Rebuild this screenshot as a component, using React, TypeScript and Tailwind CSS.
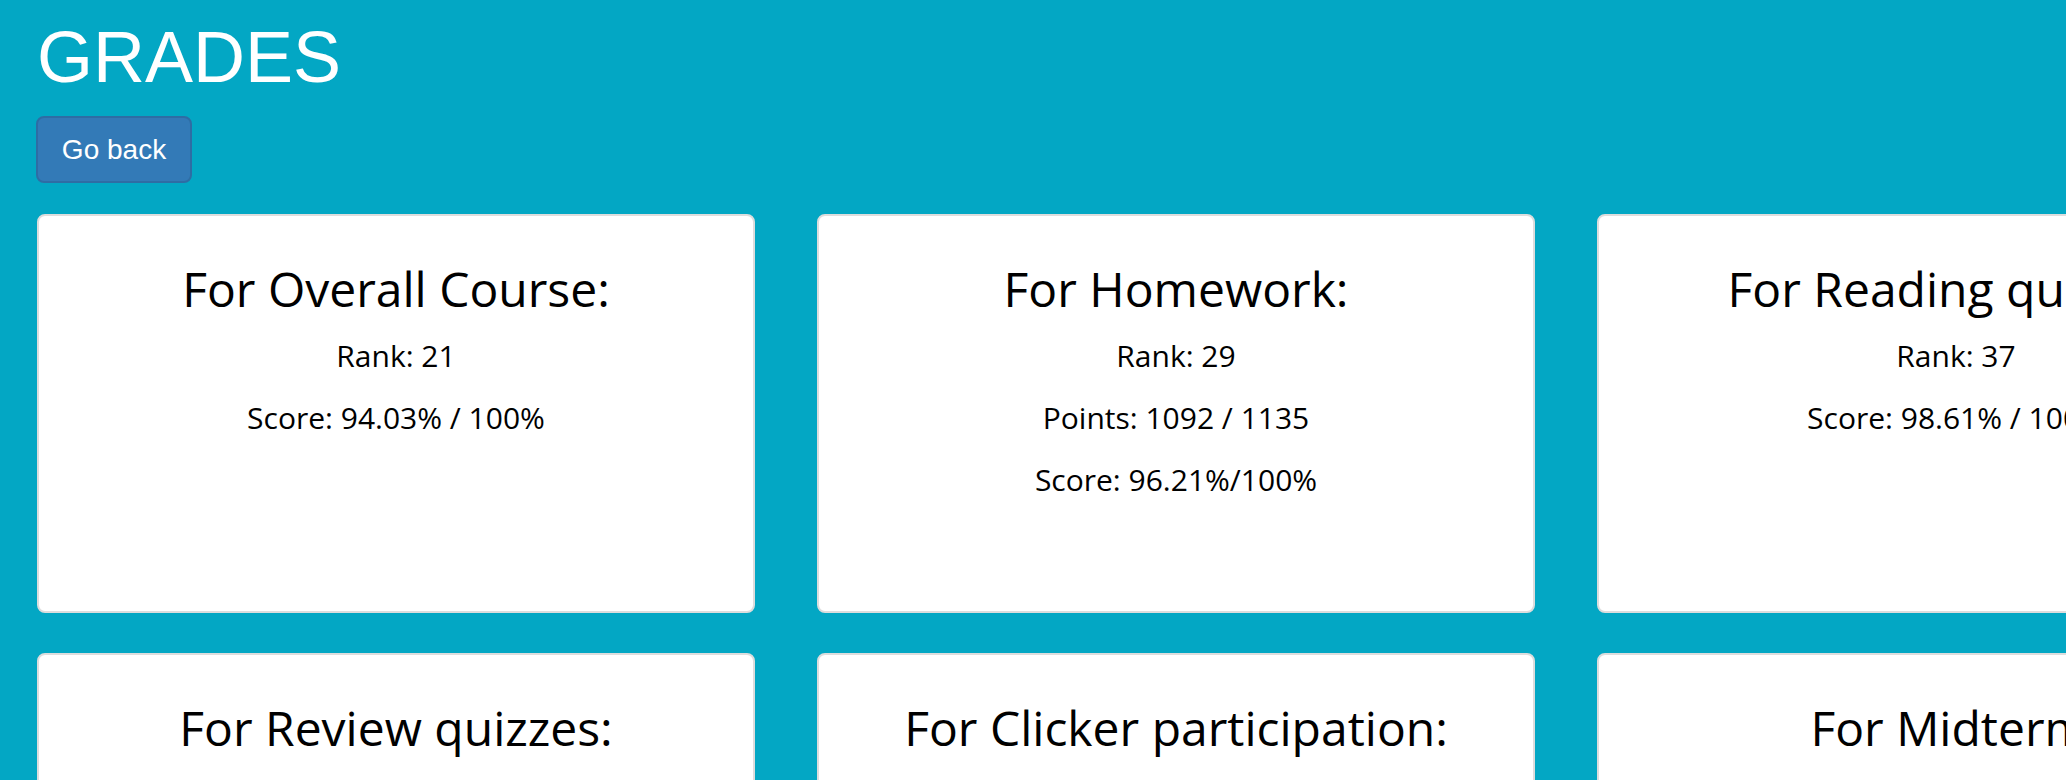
import React from 'react';

type Card = {
  title: string;
  lines: string[];
};

const cards: Card[] = [
  { title: 'For Overall Course:', lines: ['Rank: 21', 'Score: 94.03% / 100%'] },
  { title: 'For Homework:', lines: ['Rank: 29', 'Points: 1092 / 1135', 'Score: 96.21%/100%'] },
  { title: 'For Reading quizzes:', lines: ['Rank: 37', 'Score: 98.61% / 100%'] },
  { title: 'For Review quizzes:', lines: ['Rank: 18', 'Score: 97.50% / 100%'] },
  { title: 'For Clicker participation:', lines: ['Rank: 1', 'Score: 100% / 100%'] },
  { title: 'For Midterm:', lines: ['Rank: 24', 'Score: 91.20% / 100%'] },
];

function GradeCard({ card }: { card: Card }) {
  return (
    <div className="h-[399px] w-[718px] rounded-[8px] border-2 border-[#dddddd] bg-white pt-[43px] text-center text-black [font-family:'Open_Sans',sans-serif]">
      <h2 className="text-[48px] leading-[60px] font-normal whitespace-nowrap">{card.title}</h2>
      <div className="mt-[6px]">
        {card.lines.map((line) => (
          <p key={line} className="text-[30px] leading-[62px] whitespace-nowrap">
            {line}
          </p>
        ))}
      </div>
    </div>
  );
}

export default function App() {
  return (
    <div className="h-screen w-screen overflow-hidden bg-[#03a7c4] pl-[37px] [font-family:'Liberation_Sans',Arial,sans-serif]">
      {/* Header */}
      <h1 className="pt-[18px] text-[72px] leading-[79px] font-normal text-white">GRADES</h1>

      <button className="-ml-px mt-[19px] flex h-[67px] w-[156px] items-center justify-center rounded-[8px] border-2 border-[#2e6da4] bg-[#337ab7] text-[28px] text-white">
        Go back
      </button>

      {/* Cards */}
      <div className="mt-[31px] grid w-max grid-cols-[718px_718px_718px] gap-x-[62px] gap-y-[40px]">
        {cards.map((card) => (
          <GradeCard key={card.title} card={card} />
        ))}
      </div>
    </div>
  );
}
